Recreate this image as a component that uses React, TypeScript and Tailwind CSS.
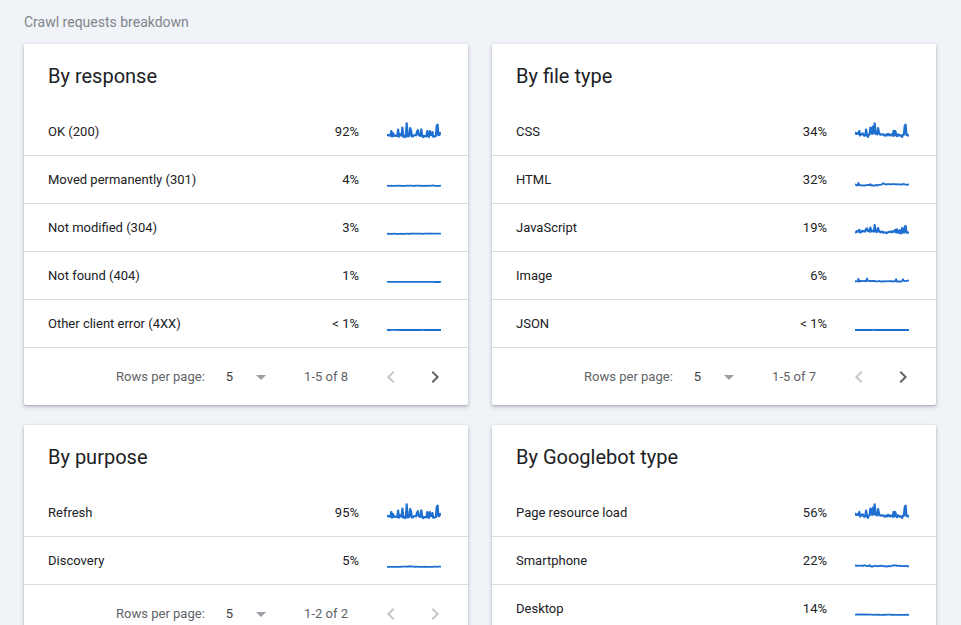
import React from 'react';

type Row = { label: string; pct: string; seed: number; amp: number; spikes: number };

type Card = { title: string; rows: Row[]; range?: string; nextEnabled?: boolean };

const cards: Card[] = [
  {
    title: 'By response',
    range: '1-5 of 8',
    nextEnabled: true,
    rows: [
      { label: 'OK (200)', pct: '92%', seed: 3, amp: 1, spikes: 1 },
      { label: 'Moved permanently (301)', pct: '4%', seed: 7, amp: 0.12, spikes: 0.2 },
      { label: 'Not modified (304)', pct: '3%', seed: 11, amp: 0.08, spikes: 0.1 },
      { label: 'Not found (404)', pct: '1%', seed: 13, amp: 0.02, spikes: 0 },
      { label: 'Other client error (4XX)', pct: '< 1%', seed: 17, amp: 0.01, spikes: 0 },
    ],
  },
  {
    title: 'By file type',
    range: '1-5 of 7',
    nextEnabled: true,
    rows: [
      { label: 'CSS', pct: '34%', seed: 21, amp: 1, spikes: 1 },
      { label: 'HTML', pct: '32%', seed: 23, amp: 0.35, spikes: 0.3 },
      { label: 'JavaScript', pct: '19%', seed: 29, amp: 0.6, spikes: 0.8 },
      { label: 'Image', pct: '6%', seed: 31, amp: 0.35, spikes: 0.5 },
      { label: 'JSON', pct: '< 1%', seed: 37, amp: 0.01, spikes: 0 },
    ],
  },
  {
    title: 'By purpose',
    range: '1-2 of 2',
    nextEnabled: false,
    rows: [
      { label: 'Refresh', pct: '95%', seed: 3, amp: 1, spikes: 1 },
      { label: 'Discovery', pct: '5%', seed: 41, amp: 0.08, spikes: 0.1 },
    ],
  },
  {
    title: 'By Googlebot type',
    rows: [
      { label: 'Page resource load', pct: '56%', seed: 21, amp: 1, spikes: 1 },
      { label: 'Smartphone', pct: '22%', seed: 43, amp: 0.35, spikes: 0.3 },
      { label: 'Desktop', pct: '14%', seed: 47, amp: 0.1, spikes: 0 },
    ],
  },
];

function rng(seed: number) {
  let a = seed * 9301 + 49297;
  return () => {
    a |= 0;
    a = (a + 0x6d2b79f5) | 0;
    let t = Math.imul(a ^ (a >>> 15), 1 | a);
    t = (t + Math.imul(t ^ (t >>> 7), 61 | t)) ^ t;
    return ((t ^ (t >>> 14)) >>> 0) / 4294967296;
  };
}

// jagged little trend line, baseline near the bottom
const Sparkline = ({ seed, amp, spikes }: { seed: number; amp: number; spikes: number }) => {
  const r = rng(seed);
  const n = 64;
  const pts: string[] = [];
  let walk = 0.15;
  for (let i = 0; i < n; i++) {
    const x = (i / (n - 1)) * 54;
    walk += (r() - 0.5) * 0.12;
    walk = Math.min(0.3, Math.max(0.05, walk));
    let v = walk + r() * 0.15;
    if (r() < 0.12 * spikes) v += 0.15 + r() * 0.35;
    if (spikes > 0.5) {
      if (i === 5) v = 0.5;
      if (i === 13) v = 0.6;
      if (i === 18) v = 0.75;
      if (i === 23) v = 1.05;
      if (i === 27) v = 0.7;
      if (i === 47) v = 0.5;
      if (i === 58) v = 0.85;
      if (i === 59) v = 0.95;
    }
    const y = 16 - v * 14 * amp;
    pts.push(`${x.toFixed(1)},${y.toFixed(1)}`);
  }
  return (
    <svg width="54" height="20" viewBox="0 0 54 20" className="shrink-0">
      <polyline
        points={pts.join(' ')}
        fill="none"
        stroke="#1f6fd1"
        strokeWidth={amp > 0.5 ? 2.2 : 1.8}
        strokeLinejoin="round"
      />
    </svg>
  );
};

const Chevron = ({ dir, enabled }: { dir: 'left' | 'right'; enabled: boolean }) => (
  <svg width="24" height="24" viewBox="0 0 24 24" className="shrink-0">
    <path
      d={dir === 'left' ? 'M15.4 7.4 14 6l-6 6 6 6 1.4-1.4L10.8 12z' : 'M8.6 16.6 10 18l6-6-6-6-1.4 1.4 4.6 4.6z'}
      fill={enabled ? '#5f6368' : '#c4c7ca'}
    />
  </svg>
);

const BreakdownCard = ({ card }: { card: Card }) => (
  <div className="bg-white rounded-[2px] shadow-[0_1px_2px_rgba(60,64,67,0.3),0_2px_4px_1px_rgba(60,64,67,0.15)]">
    <div className="h-16 flex items-center px-6 text-[20px] text-[#202124]">{card.title}</div>
    {card.rows.map((row) => (
      <div
        key={row.label}
        className="h-12 flex items-center pl-6 pr-[27px] border-b border-[#dadce0] text-[13px] text-[#202124]"
      >
        <div className="flex-1">{row.label}</div>
        <div className="mr-7 text-right">{row.pct}</div>
        <Sparkline seed={row.seed} amp={row.amp} spikes={row.spikes} />
      </div>
    ))}
    {card.range && (
      <div className="h-[57px] flex items-center justify-end pr-[21px] text-[13px] text-[#5f6368]">
        <span>Rows per page:</span>
        <span className="ml-[21px] text-[#3c4043]">5</span>
        <svg width="24" height="24" viewBox="0 0 24 24" className="ml-4">
          <path d="M7 10l5 5 5-5z" fill="#9aa0a6" />
        </svg>
        <span className="ml-[31px]">{card.range}</span>
        <div className="ml-[31px]">
          <Chevron dir="left" enabled={false} />
        </div>
        <div className="ml-5">
          <Chevron dir="right" enabled={!!card.nextEnabled} />
        </div>
      </div>
    )}
  </div>
);

export default function App() {
  return (
    <div className="min-h-screen bg-[#f0f3f8] px-6 pt-[12px] pb-10 font-['Roboto','Liberation_Sans',sans-serif]">
      <div className="text-[14px] text-[#80868b] h-[20px] leading-[20px]">Crawl requests breakdown</div>
      <div className="grid grid-cols-2 gap-x-6 gap-y-5 mt-3 w-[912px] items-start">
        {cards.map((c) => (
          <BreakdownCard key={c.title} card={c} />
        ))}
      </div>
    </div>
  );
}
